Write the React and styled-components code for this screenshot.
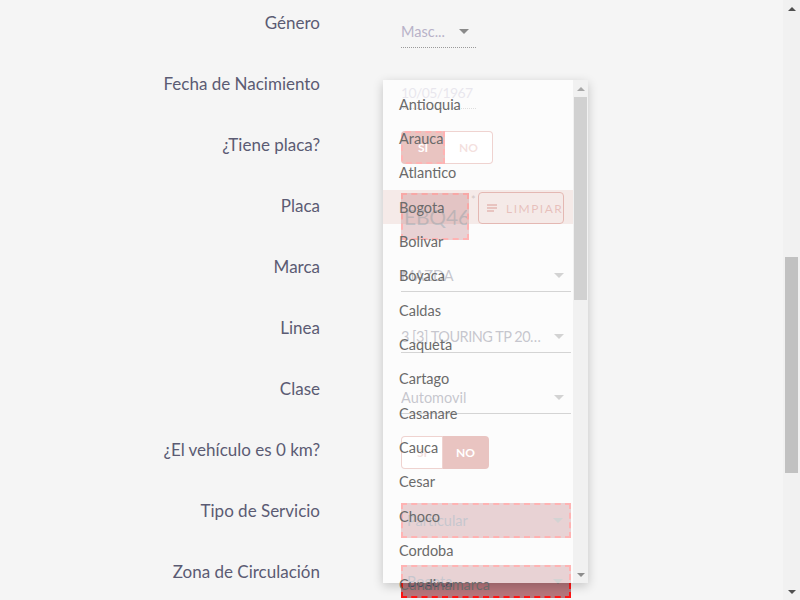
import React from 'react';
import styled, { createGlobalStyle, css } from 'styled-components';

const BRAND = '#bc4a3f';

const GlobalStyle = createGlobalStyle`
  html, body {
    margin: 0;
    padding: 0;
    background: #f5f5f5;
    overflow: hidden;
  }
  body {
    font-family: Lato, "Liberation Sans", sans-serif;
  }
`;

const Page = styled.div`
  display: flex;
  width: 800px;
  height: 600px;
  overflow: hidden;
`;

const Viewport = styled.main`
  flex: 1;
  position: relative;
  overflow: hidden;
`;

const Form = styled.div`
  display: grid;
  grid-template-columns: 320px 170px;
  grid-auto-rows: 61px;
  column-gap: 81px;
`;

const Label = styled.div`
  text-align: right;
  font-size: 17px;
  line-height: 22px;
  padding-top: 12px;
  color: #5b5b73;
`;

const Cell = styled.div`
  display: flex;
  align-items: flex-start;
`;

const flagged = css`
  border: 2px dashed #ff1414;
  background: rgba(125, 0, 12, 0.52);
`;

const SelectBox = styled.div`
  box-sizing: border-box;
  margin-top: ${p => p.$top ?? 16}px;
  width: ${p => p.$w ?? 170}px;
  height: ${p => p.$h ?? 32}px;
  display: flex;
  align-items: center;
  gap: 6px;
  font-size: 14.5px;
  letter-spacing: ${p => (p.$tight ? '-0.5px' : '0')};
  color: ${p => (p.$disabled ? '#b8b2c8' : '#4f4f66')};
  border-bottom: 1px ${p => (p.$disabled ? 'dotted #9a9a9a' : 'solid #7a7a7a')};
  ${p => p.$flag && flagged}
  ${p => p.$flag && css`padding-left: 4px;`}
`;

const Value = styled.span`
  flex: 1;
  white-space: nowrap;
  overflow: hidden;
  text-overflow: ellipsis;
`;

const DateValue = styled.span`
  white-space: nowrap;
  font-size: 14px;
  letter-spacing: -0.6px;
`;

const Caret = styled.span`
  width: 0;
  height: 0;
  margin-right: ${p => p.$mr ?? 6}px;
  border-left: 5px solid transparent;
  border-right: 5px solid transparent;
  border-top: 5px solid ${p => (p.$disabled ? '#8a8a8a' : '#777')};
`;

const ToggleGroup = styled.div`
  display: flex;
  margin-top: 9px;
  height: 33px;
`;

const ToggleBtn = styled.button`
  box-sizing: border-box;
  width: ${p => p.$w}px;
  height: 100%;
  padding: 0;
  font-family: inherit;
  font-size: 12px;
  font-weight: 700;
  border: 1px solid rgba(188, 74, 63, 0.75);
  background: ${p => (p.$on ? BRAND : '#fff')};
  color: ${p => (p.$on ? '#fff' : 'rgba(188, 74, 63, 0.55)')};
  &:first-child { border-radius: 4px 0 0 4px; }
  &:last-child { border-radius: 0 4px 4px 0; border-left: none; }
  ${p => p.$flag && css`border: 2px dashed #ff1414;`}
`;

const PlateRow = styled.div`
  display: flex;
  align-items: flex-start;
  margin-top: 9px;
`;

const PlateInput = styled.div`
  box-sizing: border-box;
  width: 68px;
  height: 47px;
  margin-top: 1px;
  padding-left: 1px;
  overflow: hidden;
  white-space: nowrap;
  font-size: 21px;
  letter-spacing: -0.2px;
  line-height: 43px;
  color: #3a3a4c;
  ${flagged}
`;

const Required = styled.span`
  width: 9px;
  font-size: 11px;
  color: #777;
  margin: 1px 0 0 2px;
`;

const ClearButton = styled.button`
  box-sizing: border-box;
  margin-left: -2px;
  width: 86px;
  height: 32px;
  display: flex;
  align-items: center;
  gap: 8px;
  padding: 0 0 0 7px;
  border: 1px solid ${BRAND};
  border-radius: 4px;
  background: transparent;
  color: rgba(188, 74, 63, 0.85);
  font-family: inherit;
  font-size: 12px;
  letter-spacing: 1.5px;
  white-space: nowrap;
  svg { flex: none; }
`;

const Menu = styled.div`
  position: absolute;
  left: 383px;
  top: 80px;
  width: 205px;
  height: 503px;
  display: flex;
  align-items: flex-start;
  background: rgba(255, 255, 255, 0.68);
  box-shadow: 0 3px 10px rgba(0, 0, 0, 0.2);
`;

const MenuList = styled.ul`
  flex: 1;
  margin: 0;
  padding: 7px 0 0;
  list-style: none;
`;

const MenuItem = styled.li`
  height: 34.33px;
  display: flex;
  align-items: center;
  padding: 0 16px;
  font-size: 14.5px;
  color: #6a6a6a;
  background: ${p => (p.$selected ? 'rgba(188, 74, 63, 0.1)' : 'transparent')};
`;

const ScrollTrack = styled.div`
  box-sizing: border-box;
  width: ${p => p.$w}px;
  height: 100%;
  flex: none;
  display: flex;
  flex-direction: column;
  background: #f1f1f1;
`;

const ScrollArrow = styled.div`
  height: 17px;
  flex: none;
  display: flex;
  align-items: center;
  justify-content: center;
  &::after {
    content: '';
    width: 0;
    height: 0;
    border-left: 4px solid transparent;
    border-right: 4px solid transparent;
    ${p =>
      p.$down
        ? css`border-top: 4px solid ${p.$color};`
        : css`border-bottom: 4px solid ${p.$color};`}
  }
`;

const ScrollThumb = styled.div`
  flex: none;
  margin: ${p => p.$offset ?? 0}px ${p => p.$inset}px 0;
  height: ${p => p.$h}px;
  background: ${p => p.$color};
`;

const Spacer = styled.div`
  flex: 1;
`;

const NotesIcon = () => (
  <svg width="12" height="10" viewBox="0 0 12 10">
    <path d="M1 2h10M1 5h10M1 8h7" stroke={BRAND} strokeWidth="1.4" />
  </svg>
);

const departments = [
  'Antioquia', 'Arauca', 'Atlantico', 'Bogota', 'Bolivar', 'Boyaca', 'Caldas',
  'Caqueta', 'Cartago', 'Casanare', 'Cauca', 'Cesar', 'Choco', 'Cordoba', 'Cundinamarca',
];

const Select = ({ value, ...rest }) => (
  <SelectBox {...rest}>
    <Value>{value}</Value>
    <Caret $disabled={rest.$disabled} $mr={rest.$flag ? 6 : 7} />
  </SelectBox>
);

export default function App() {
  return (
    <Page>
      <GlobalStyle />
      <Viewport>
        <Form>
          <Label>Género</Label>
          <Cell><Select value="Masc..." $w={75} $disabled /></Cell>

          <Label>Fecha de Nacimiento</Label>
          <Cell>
            <SelectBox $w={75} $disabled><DateValue>10/05/1967</DateValue></SelectBox>
          </Cell>

          <Label>¿Tiene placa?</Label>
          <Cell>
            <ToggleGroup>
              <ToggleBtn $w={44} $on $flag>SI</ToggleBtn>
              <ToggleBtn $w={48}>NO</ToggleBtn>
            </ToggleGroup>
          </Cell>

          <Label>Placa</Label>
          <Cell>
            <PlateRow>
              <PlateInput>EBQ463</PlateInput>
              <Required>*</Required>
              <ClearButton><NotesIcon />LIMPIAR</ClearButton>
            </PlateRow>
          </Cell>

          <Label>Marca</Label>
          <Cell><Select value="MAZDA" /></Cell>

          <Label>Linea</Label>
          <Cell><Select value="3 [3] TOURING TP 2000CC" $tight /></Cell>

          <Label>Clase</Label>
          <Cell><Select value="Automovil" /></Cell>

          <Label>¿El vehículo es 0 km?</Label>
          <Cell>
            <ToggleGroup>
              <ToggleBtn $w={42}>SI</ToggleBtn>
              <ToggleBtn $w={46} $on>NO</ToggleBtn>
            </ToggleGroup>
          </Cell>

          <Label>Tipo de Servicio</Label>
          <Cell><Select value="Particular" $top={15} $h={35} $flag /></Cell>

          <Label>Zona de Circulación</Label>
          <Cell><Select value="Bogota" $top={16} $h={33} $flag /></Cell>
        </Form>

        <Menu>
          <MenuList>
            {departments.map(d => (
              <MenuItem key={d} $selected={d === 'Bogota'}>{d}</MenuItem>
            ))}
          </MenuList>
          <ScrollTrack $w={15}>
            <ScrollArrow $color="#a8a8a8" />
            <ScrollThumb $inset={1} $h={203} $color="#d1d1d1" />
            <Spacer />
            <ScrollArrow $down $color="#8c8c8c" />
          </ScrollTrack>
        </Menu>
      </Viewport>

      <ScrollTrack $w={17}>
        <ScrollArrow $color="#505050" />
        <ScrollThumb $offset={240} $inset={2} $h={216} $color="#c1c1c1" />
        <Spacer />
        <ScrollArrow $down $color="#505050" />
      </ScrollTrack>
    </Page>
  );
}
